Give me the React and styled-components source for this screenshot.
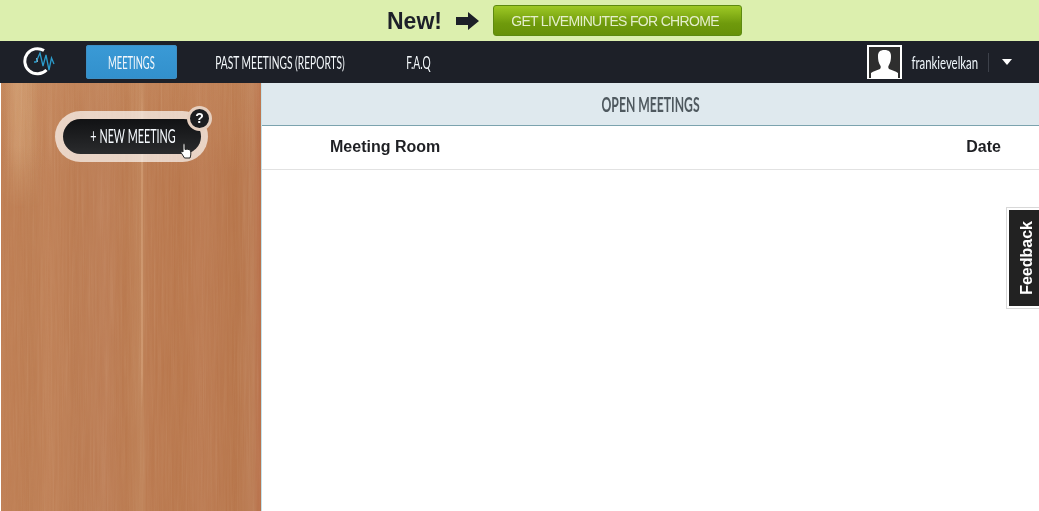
import React from "react";
import styled, { createGlobalStyle } from "styled-components";

const Global = createGlobalStyle`
  html, body { margin: 0; padding: 0; background: #fff; }
  body { font-family: "Liberation Sans", Arial, sans-serif; overflow: hidden; }
`;

const Page = styled.div`
  width: 1039px; height: 511px; display: flex; flex-direction: column; position: relative; overflow: hidden;
`;
const Banner = styled.div`
  height: 41px; flex: none; background: #dcefae; display: flex; align-items: flex-start; padding-top: 5px; box-sizing: border-box;
  padding-left: 387px;
`;
const NewLabel = styled.span`
  font-size: 23px; font-weight: 700; line-height: 32px; color: #1d2028; width: 69px;
`;
const ArrowWrap = styled.span`
  width: 37px; height: 32px; display: flex; align-items: center;
`;
const ChromeButton = styled.button`
  width: 249px; height: 31px; border: 1px solid #5d8a10; border-radius: 3px; padding: 0 5px 0 0;
  background: linear-gradient(#9ec925, #6f9a0c 60%, #679108);
  color: #e4eecb; font: 14px "Liberation Sans", sans-serif; letter-spacing: -0.68px;
`;
/* The reference uses a tall geometric condensed face; Lato squeezed horizontally stands in for it. */
const Squeezed = styled.span`
  display: inline-block; white-space: nowrap; font-family: Lato, "Liberation Sans", sans-serif;
  font-weight: ${(p) => p.$weight || 400};
  font-size: ${(p) => p.$size}px;
  transform: scaleX(${(p) => p.$sx});
`;
const Nav = styled.nav`
  height: 42px; flex: none; background: #1d2028; display: flex; align-items: center; position: relative;
`;
const LogoWrap = styled.div`
  width: 86px; flex: none; padding-left: 23px; box-sizing: border-box; display: flex; align-items: center;
`;
const NavItem = styled.a`
  height: 34px; display: flex; align-items: center; justify-content: center; box-sizing: border-box;
  color: #f4f8fb; flex: none;
  width: ${(p) => p.$w}px;
  margin-left: ${(p) => p.$ml || 0}px;
  ${(p) => p.$active && `background: linear-gradient(#3a9ad6, #3290cc); border-radius: 3px; box-shadow: inset 0 0 0 1px #3d8fc4;`}
`;
const UserArea = styled.div`
  margin-left: auto; display: flex; align-items: center; padding-right: 27px;
`;
const Avatar = styled.div`
  width: 35px; height: 34px; background: #fff; box-sizing: border-box; padding: 2px 2px 1px; display: flex; margin-right: 9px;
`;
const UserName = styled.span`
  color: #eef5fa; width: 68px; display: flex; justify-content: center;
`;
const Divider = styled.span`
  width: 1px; height: 19px; background: #3d414a; margin: 0 13px 0 9px;
`;
const Caret = styled.span`
  width: 0; height: 0; border-left: 5.5px solid transparent; border-right: 5.5px solid transparent; border-top: 6px solid #fff;
`;
const Main = styled.div`
  flex: 1; display: flex; min-height: 0;
`;
const Sidebar = styled.aside`
  width: 260px; flex: none; margin-left: 1px; position: relative; overflow: hidden; display: flex; align-items: flex-start;
  padding: 28px 0 0 54px; box-sizing: border-box;
  background:
    linear-gradient(180deg, transparent 0, rgba(235,190,150,.28) 50px, rgba(235,190,150,.28) 290px, transparent) 140px 0 / 2px 325px no-repeat,
    linear-gradient(180deg, rgba(230,180,130,.12), transparent 90px),
    linear-gradient(90deg, #be7d52 0, #bb7b50 30px, #bf8056 47px, #ba7a50 75px, #bc7d55 105px, #b9784d 125px, #bf8359 141px, #ba794f 146px, #b8764b 180px, #bb7a51 200px, #b67449 235px, #bb7c54 252px, #b66c46 260px);
  &::before {
    content: ""; position: absolute; left: 2px; top: 0; width: 40px; height: 125px;
    background: linear-gradient(90deg, transparent, rgba(238,205,160,.3) 35%, rgba(238,205,160,.22) 65%, transparent);
    mask-image: linear-gradient(180deg, #000 50%, transparent);
  }
`;
const Grain = styled.svg`
  position: absolute; inset: 0; width: 100%; height: 100%; opacity: .34; mix-blend-mode: soft-light;
`;
const PillRing = styled.div`
  position: relative; z-index: 1; padding: 8px 7px 8px 8px; border-radius: 26px; background: rgba(255,255,255,.66);
`;
const Pill = styled.button`
  display: flex; align-items: center; justify-content: center; width: 138px; height: 35px; border: 0; padding: 0 0 4px 2px; border-radius: 18px;
  background: linear-gradient(#111214, #2a2b2d); color: #f7fbff;
`;
const HelpBadge = styled.span`
  position: absolute; right: -4px; top: -5px; width: 19px; height: 19px; border-radius: 50%;
  background: #1d1e20; border: 3px solid #e6cfbf; color: #fff; font: 700 14px/19px "Liberation Sans", sans-serif; text-align: center;
`;
const CursorIcon = styled.svg`
  position: absolute; left: 125px; top: 32px; width: 12px; height: 17px;
`;
const Content = styled.section`
  flex: 1; display: flex; flex-direction: column; min-width: 0; border-left: 1px solid #c4e2ea;
`;
const SectionHead = styled.div`
  height: 43px; flex: none; background: #dfe9ee; border-bottom: 1px solid #7ba3ae; box-sizing: border-box; padding-bottom: 2px;
  display: flex; align-items: center; justify-content: center; color: #4f595f;
`;
const TableHead = styled.div`
  flex: none; border-bottom: 1px solid #e2e2e2; display: flex; align-items: center; justify-content: space-between;
  padding: 0 38px 2px 68px; box-sizing: content-box; height: 41px; font-size: 16px; font-weight: 700; color: #1f2024;
`;
const FeedbackTab = styled.div`
  position: absolute; right: 0; top: 208px; width: 32px; height: 100px; box-sizing: border-box; background: #222; border: 2px solid #fff; border-right: 0;
  box-shadow: 0 0 0 1px #d8d8d8; display: flex; align-items: center; justify-content: center; padding-left: 6px;
`;
const FeedbackText = styled.span`
  writing-mode: vertical-rl; transform: rotate(180deg); color: #fff; font: 700 16px "Liberation Sans", sans-serif;
`;

const Logo = () => (
  <svg width="34" height="30" viewBox="0 0 34 30">
    <path d="M21 3.500A12.600 12.600 0 1 0 23.500 23" fill="none" stroke="#fff" strokeWidth="3" />
    <path d="M14 11v4" stroke="#fff" strokeWidth="1.200" />
    <path d="M11 15h2l4-9 3 13 3-11 3 15 2.500-12 2.500 6" fill="none" stroke="#2b9bcb" strokeWidth="1.300" />
  </svg>
);
const Arrow = () => (
  <svg width="23" height="18" viewBox="0 0 23 18"><path d="M0 5h12V0l11 9-11 9v-5H0z" fill="#1d2028" /></svg>
);
const Person = () => (
  <svg width="31" height="31" viewBox="0 0 31 31">
    <rect width="31" height="31" fill="#2e2e2e" />
    <path d="M2 31v-5c2-2 7-3 9-4 1-1 1-3 0-4-1-2-2-4-2-9 0-4 2-6 6.500-6s6.500 2 6.500 6c0 5-1 7-2 9-1 1-1 3 0 4 2 1 7 2 9 4v5z" fill="#fff" />
  </svg>
);

export default function App() {
  return (
    <Page>
      <Global />
      <Banner>
        <NewLabel>New!</NewLabel>
        <ArrowWrap><Arrow /></ArrowWrap>
        <ChromeButton>GET LIVEMINUTES FOR CHROME</ChromeButton>
      </Banner>
      <Nav>
        <LogoWrap><Logo /></LogoWrap>
        <NavItem $active $w={91}><Squeezed $size={17} $sx={0.55}>MEETINGS</Squeezed></NavItem>
        <NavItem $w={170} $ml={18}><Squeezed $size={17} $sx={0.6}>PAST MEETINGS (REPORTS)</Squeezed></NavItem>
        <NavItem $w={60} $ml={23}><Squeezed $size={17} $sx={0.6}>F.A.Q</Squeezed></NavItem>
        <UserArea>
          <Avatar><Person /></Avatar>
          <UserName><Squeezed $size={17} $sx={0.67}>frankievelkan</Squeezed></UserName>
          <Divider />
          <Caret />
        </UserArea>
      </Nav>
      <Main>
        <Sidebar>
          <Grain aria-hidden="true">
            <filter id="wood">
              <feTurbulence type="fractalNoise" baseFrequency="0.6 0.012" numOctaves="4" seed="11" />
              <feColorMatrix type="saturate" values="0" />
            </filter>
            <rect width="100%" height="100%" filter="url(#wood)" />
          </Grain>
          <PillRing>
            <Pill><Squeezed $size={20} $sx={0.54}>+ NEW MEETING</Squeezed></Pill>
            <HelpBadge>?</HelpBadge>
            <CursorIcon viewBox="0 0 12 17">
              <path d="M3 1.500c0-1 2-1 2 0v5c1-.5 4-.5 5.500 1 .5 2 .5 5-.5 7.500H4.500L1 9.500c0-1 1-1.500 2-.5z" fill="#fff" stroke="#222" strokeWidth="1" />
            </CursorIcon>
          </PillRing>
        </Sidebar>
        <Content>
          <SectionHead><Squeezed $size={21} $sx={0.58} $weight={700}>OPEN MEETINGS</Squeezed></SectionHead>
          <TableHead><span>Meeting Room</span><span>Date</span></TableHead>
        </Content>
      </Main>
      <FeedbackTab><FeedbackText>Feedback</FeedbackText></FeedbackTab>
    </Page>
  );
}
